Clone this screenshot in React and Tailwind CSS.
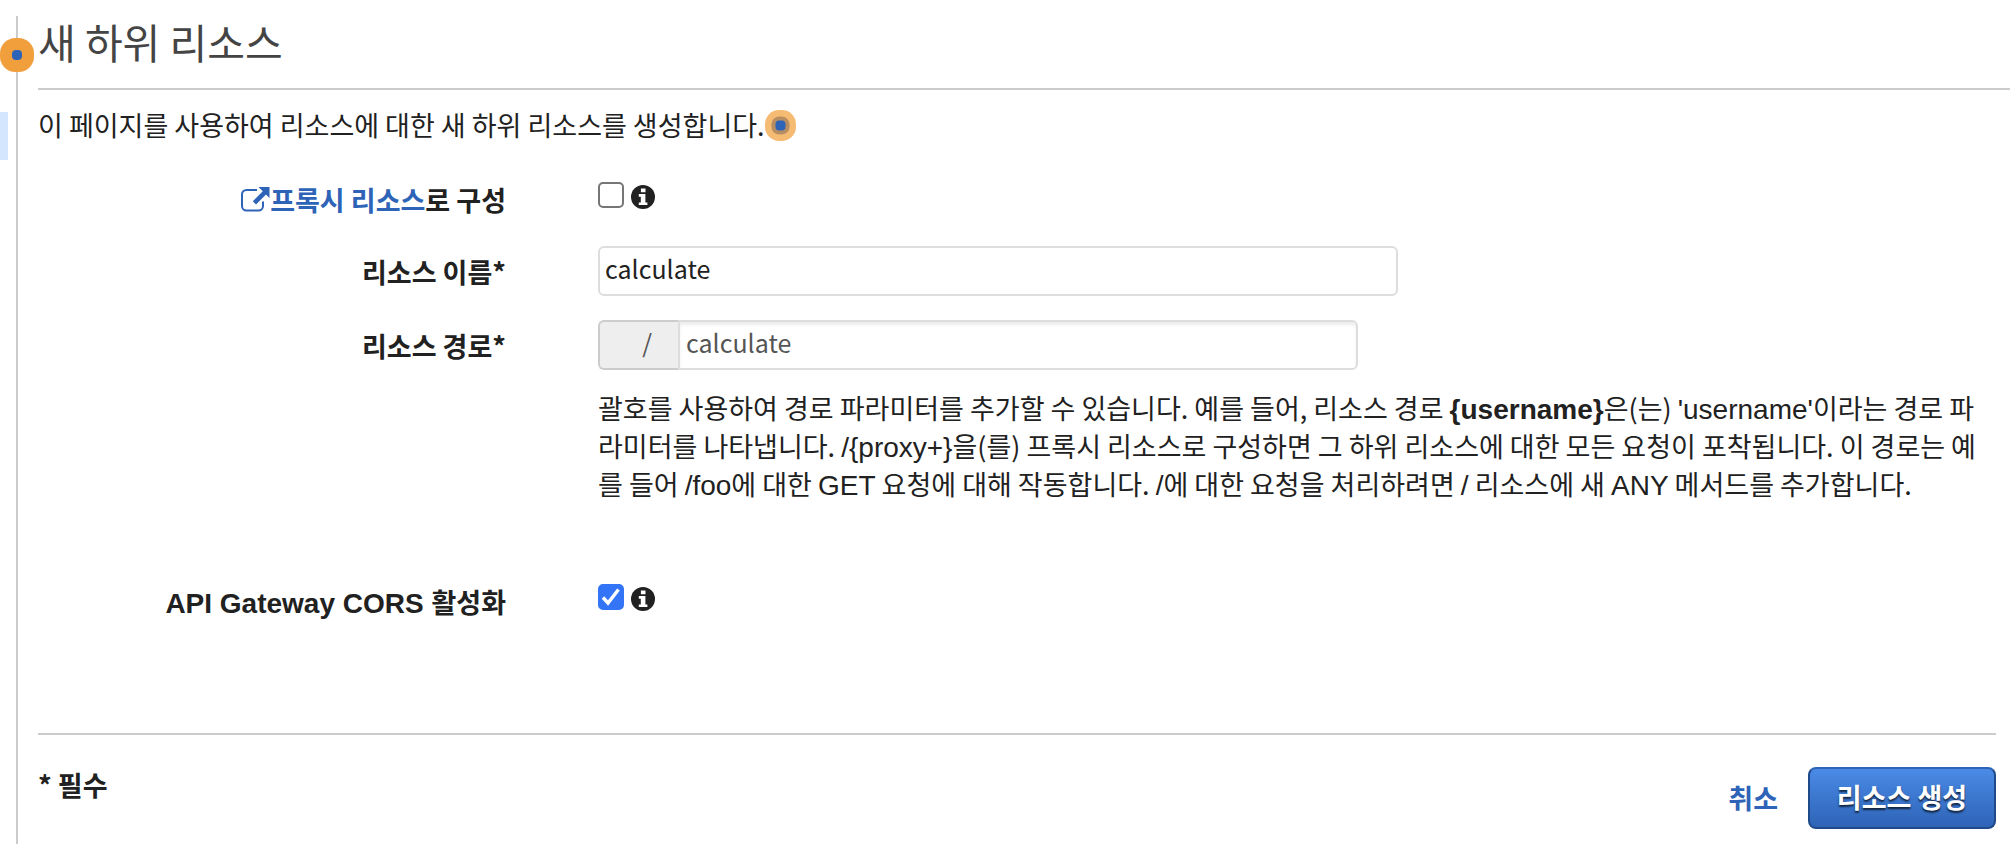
import React from "react";

function Beacon({ className, children }) {
  return (
    <svg viewBox="0 0 34 34" className={className} aria-hidden="true">
      {children}
    </svg>
  );
}

function InfoIcon() {
  return (
    <svg viewBox="0 0 24 24" className="mt-1 size-6 shrink-0 fill-[#212121]" role="img" aria-label="정보">
      <circle cx="12" cy="12" r="12" />
      <path
        className="fill-white"
        d="M9.900 3.400h4.600v3.800H9.900zM7.800 9h6.600v8.400h2v2.700H7.800v-2.700h2v-5.700h-2z"
      />
    </svg>
  );
}

function ExternalIcon() {
  return (
    <svg viewBox="0 0 30 26" className="mt-1 h-[26px] w-[30px] shrink-0" aria-hidden="true">
      <path
        d="M17 4H6.500a4.500 4.500 0 0 0-4.500 4.500v11.500a4.500 4.500 0 0 0 4.500 4.500h12a4.500 4.500 0 0 0 4.500-4.500V15.500"
        fill="none"
        stroke="#2e64b7"
        strokeWidth="2"
      />
      <path d="M18.500 1H29.500V12L26 8.500 16 18.500 12.800 15.300 22.800 5.300z" fill="#2e64b7" />
    </svg>
  );
}

function Latin({ children }) {
  return <span className="font-['Liberation_Sans',sans-serif] text-[28px] leading-none">{children}</span>;
}

function Checkbox({ id, defaultChecked }) {
  return (
    <span className="grid size-[26px] shrink-0">
      <input
        id={id}
        type="checkbox"
        defaultChecked={defaultChecked}
        className="peer col-start-1 row-start-1 size-[26px] appearance-none rounded-[5px] border-2 border-[#767676] bg-white checked:border-[#3375f6] checked:bg-[#3375f6]"
      />
      <svg
        viewBox="0 0 26 26"
        className="pointer-events-none col-start-1 row-start-1 hidden size-[26px] peer-checked:block"
        aria-hidden="true"
      >
        <path d="M5 13.500l5 5.500L20.500 5.500" fill="none" stroke="#fff" strokeWidth="3.400" />
      </svg>
    </span>
  );
}

function Row({ label, children, className }) {
  return (
    <div className={"grid grid-cols-[468px_minmax(0,1fr)] gap-x-[92px] " + className}>
      <div className="flex justify-end pt-2 text-[27px] leading-9 font-bold">{label}</div>
      <div className="min-w-0">{children}</div>
    </div>
  );
}

export default function App() {
  return (
    <div className="flex min-h-screen bg-white font-['Noto_Sans_CJK_KR',sans-serif] text-[#212121]">
      <div className="relative w-[38px] shrink-0 pt-4 pl-4">
        <div className="h-full w-0.5 bg-[#cccccc]" />
        <div className="absolute top-28 left-0 h-12 w-2 bg-[#d3e6fd]" />
        <Beacon className="absolute top-[38px] left-0 size-[34px]">
          <rect width="34" height="34" rx="15.500" fill="#f09f3c" />
          <rect x="12" y="12" width="10" height="10" rx="4" fill="#2e64b7" />
        </Beacon>
      </div>

      <main className="min-w-0 flex-1">
        <h1 className="h-[90px] border-b-2 border-[#cccccc] pt-[13px] text-[41px] leading-[56px] text-[#444444]">
          새 하위 리소스
        </h1>

        <p className="flex items-center pt-[17px] text-[27px] leading-9">
          이 페이지를 사용하여 리소스에 대한 새 하위 리소스를 생성합니다.
          <Beacon className="size-[31px]">
            <rect width="34" height="34" rx="15.500" fill="#f6bb72" />
            <rect x="7" y="7" width="20" height="20" rx="9" fill="#b78e61" />
            <rect x="11.500" y="11.500" width="11" height="11" rx="4" fill="#2e64b7" />
          </Beacon>
        </p>

        <form onSubmit={(e) => e.preventDefault()}>
          <Row
            className="mt-[31px]"
            label={
              <>
                <a href="#proxy" className="flex text-[#2e64b7]">
                  <ExternalIcon />
                  프록시 리소스
                </a>
                <label htmlFor="proxy">로 구성</label>
              </>
            }
          >
            <div className="flex items-center gap-[7px] pt-[7px]">
              <Checkbox id="proxy" />
              <InfoIcon />
            </div>
          </Row>

          <Row className="mt-7" label={<label htmlFor="name">리소스 이름*</label>}>
            <input
              id="name"
              type="text"
              defaultValue="calculate"
              className="h-[50px] w-full max-w-[800px] rounded-md border-2 border-[#dddddd] px-[5px] pb-1.5 text-[25px]"
            />
          </Row>

          <Row className="mt-6" label={<label htmlFor="path">리소스 경로*</label>}>
            <div className="flex max-w-[760px]">
              <span className="flex h-[50px] w-20 shrink-0 items-center justify-end rounded-l-md border-2 border-r-0 border-[#cccccc] bg-[#eeeeee] pr-[26px] pb-1 text-[25px] text-[#555555]">
                /
              </span>
              <input
                id="path"
                type="text"
                defaultValue="calculate"
                className="h-[50px] min-w-0 flex-1 rounded-r-md border-2 border-[#dddddd] px-1.5 pb-1.5 text-[25px] text-[#555555] shadow-[inset_0_3px_3px_rgba(0,0,0,0.075)]"
              />
            </div>
            <p className="max-w-[1390px] pt-[19px] text-[27px] leading-[38px]">
              괄호를 사용하여 경로 파라미터를 추가할 수 있습니다. 예를 들어, 리소스 경로{" "}
              <strong>
                <Latin>{"{username}"}</Latin>
              </strong>
              은(는) <Latin>'username'</Latin>이라는 경로 파라미터를 나타냅니다. <Latin>{"/{proxy+}"}</Latin>을(를) 프록시
              리소스로 구성하면 그 하위 리소스에 대한 모든 요청이 포착됩니다. 이 경로는 예를 들어 <Latin>/foo</Latin>에
              대한 <Latin>GET</Latin> 요청에 대해 작동합니다. <Latin>/</Latin>에 대한 요청을 처리하려면{" "}
              <Latin>/</Latin> 리소스에 새 <Latin>ANY</Latin> 메서드를 추가합니다.
            </p>
          </Row>

          <Row
            className="mt-[73px]"
            label={
              <label htmlFor="cors">
                <Latin>API Gateway CORS </Latin>활성화
              </label>
            }
          >
            <div className="flex items-center gap-[7px] pt-[7px]">
              <Checkbox id="cors" defaultChecked />
              <InfoIcon />
            </div>
          </Row>

          <footer className="mt-[113px] mr-3.5 flex justify-between border-t-2 border-[#cccccc] pt-8 text-[27px] leading-9 font-bold">
            <span>* 필수</span>
            <div className="flex items-center gap-[30px]">
              <a href="#cancel" className="text-[#2e64b7]">
                취소
              </a>
              <button
                type="submit"
                className="h-[62px] w-[188px] rounded-lg border-2 border-[#1f4a8a] border-t-[#2e64b7] bg-linear-to-b from-[#4a8ae6] to-[#2e64b7] pb-0.5 text-white [text-shadow:0_2px_2px_rgba(0,0,0,0.7)]"
              >
                리소스 생성
              </button>
            </div>
          </footer>
        </form>
      </main>
    </div>
  );
}
